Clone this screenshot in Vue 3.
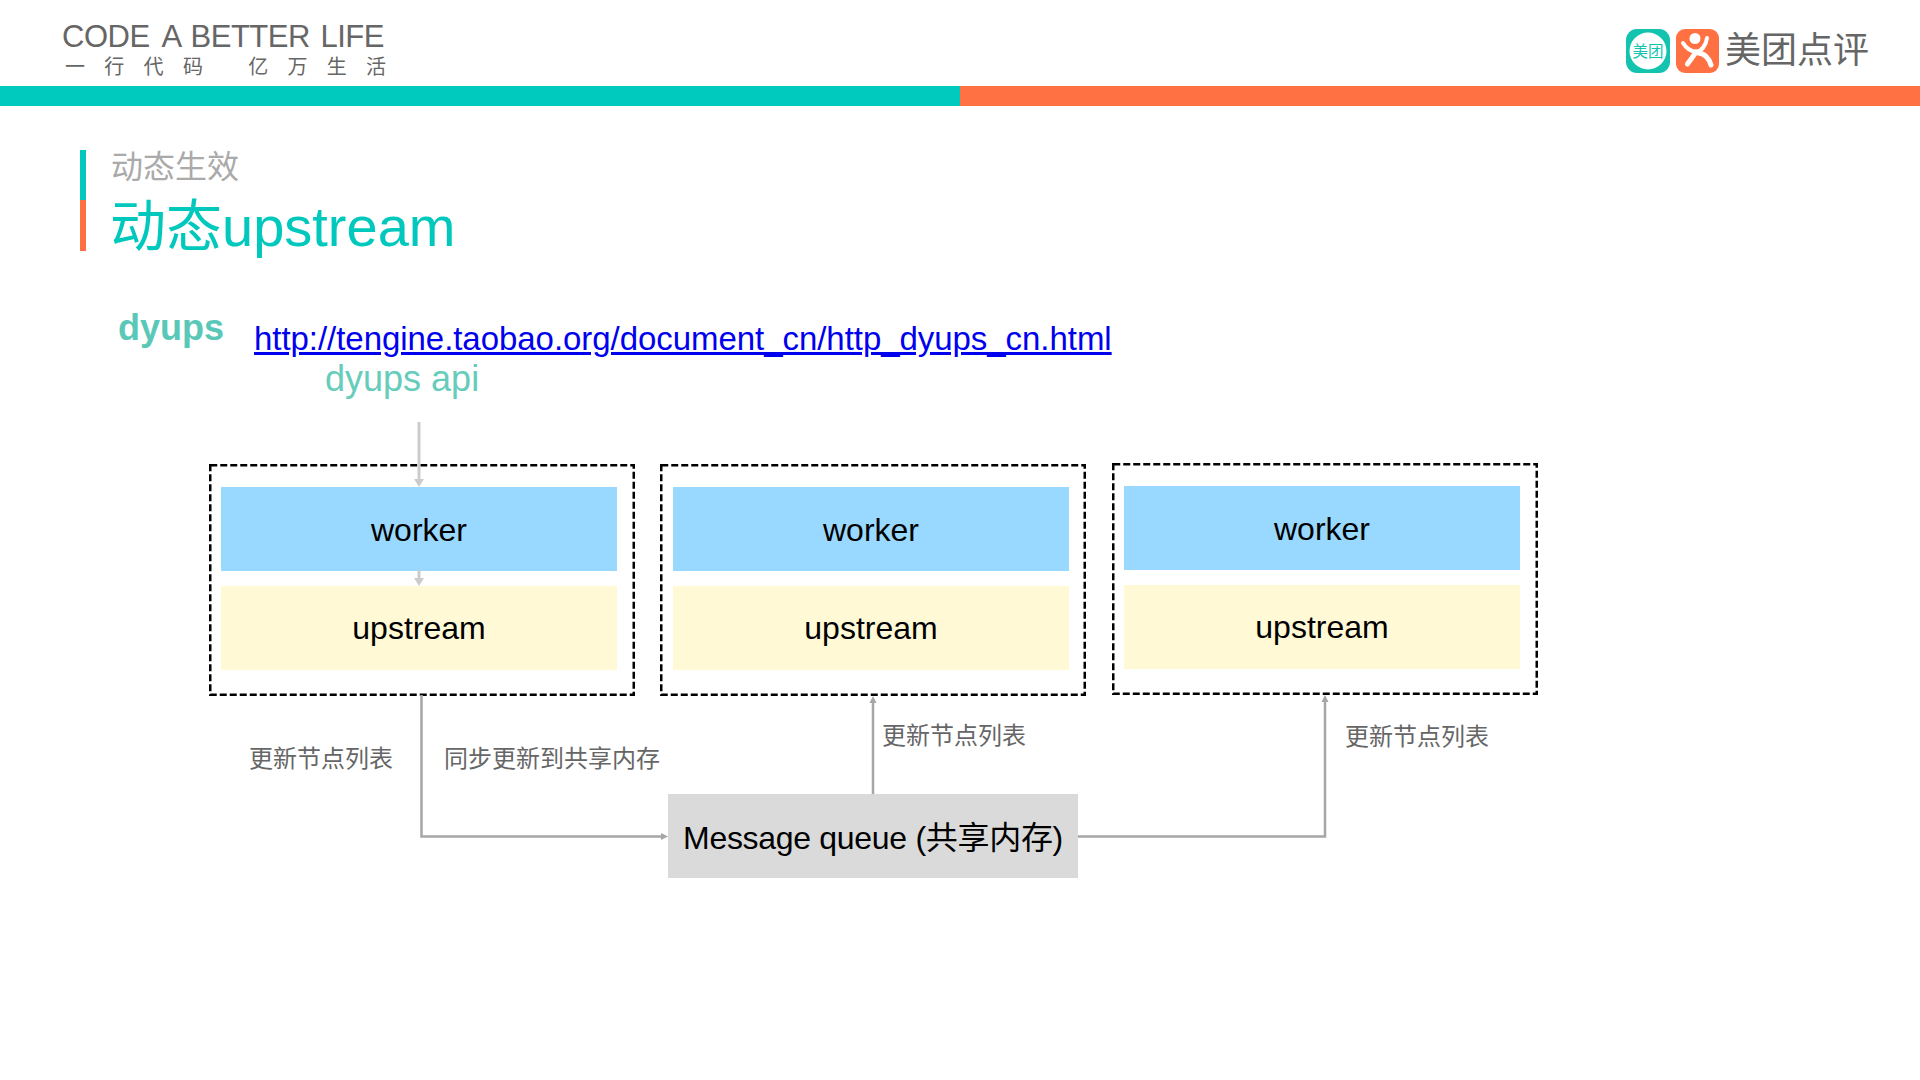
<script setup>
const boxes = [
  { x: 209, y: 464, pad: 12 },
  { x: 660, y: 464, pad: 13 },
  { x: 1112, y: 463, pad: 12 },
]
const labels = [
  { text: '更新节点列表', x: 249, y: 742 },
  { text: '同步更新到共享内存', x: 444, y: 742 },
  { text: '更新节点列表', x: 882, y: 719 },
  { text: '更新节点列表', x: 1345, y: 720 },
]
</script>

<template>
  <div class="slide">
    <header class="top">
      <div class="motto">
        <div class="motto-en"><span class="code">CODE</span> A BETTER LIFE</div>
        <div class="motto-cn"><span>一行代码</span><span>亿万生活</span></div>
      </div>
      <div class="brand">
        <svg class="mt" width="44" height="44" viewBox="0 0 44 44">
          <rect width="44" height="44" rx="11" fill="#13c3ae" />
          <circle cx="22" cy="22" r="18.5" fill="#fff" />
          <text x="22" y="28" text-anchor="middle" font-size="15.5" fill="#13c3ae" font-family="'Noto Sans CJK SC', sans-serif">美团</text>
        </svg>
        <svg class="dp" width="43" height="44" viewBox="0 0 43 44">
          <rect width="43" height="44" rx="9" fill="#ff7043" />
          <circle cx="19" cy="9.5" r="5.5" fill="#fff" />
          <path d="M7 14 C10 19 14 22 20 23 C26 22 30 16 31 9" fill="none" stroke="#fff" stroke-width="4" stroke-linecap="round" />
          <path d="M20 23 C17 28 14 31 11.5 35 M22 24 C28 24 33 29 35 36" fill="none" stroke="#fff" stroke-width="5" stroke-linecap="round" />
        </svg>
        <span class="brand-text">美团点评</span>
      </div>
    </header>
    <div class="stripe"></div>

    <section class="heading">
      <div class="heading-bar"></div>
      <div class="heading-text">
        <div class="eyebrow">动态生效</div>
        <h1 class="title">动态upstream</h1>
      </div>
    </section>

    <section class="intro">
      <div class="dyups">dyups</div>
      <div class="intro-right">
        <a class="link" href="#">http://tengine.taobao.org/document_cn/http_dyups_cn.html</a>
        <div class="api">dyups api</div>
      </div>
    </section>

    <div class="canvas">
      <div v-for="(b, i) in boxes" :key="i" class="box" :style="{ left: b.x + 'px', top: b.y + 'px', paddingLeft: b.pad + 'px' }">
        <svg class="dash" width="426" height="232" viewBox="0 0 426 232">
          <rect x="1.25" y="1.25" width="423.5" height="229.5" fill="none" stroke="#000" stroke-width="2.5" stroke-dasharray="7 3" />
        </svg>
        <div class="worker">worker</div>
        <div class="upstream">upstream</div>
      </div>
      <div class="queue">Message queue (共享内存)</div>
      <span v-for="(l, i) in labels" :key="'l' + i" class="label" :style="{ left: l.x + 'px', top: l.y + 'px' }">{{ l.text }}</span>
      <svg class="wires" width="1920" height="1080" viewBox="0 0 1920 1080">
        <path d="M419 422V480" stroke="#cccccc" stroke-width="3" fill="none" />
        <path d="M414 479H424L419 487Z" fill="#cccccc" />
        <path d="M419 570V578" stroke="#cccccc" stroke-width="3" fill="none" />
        <path d="M414 578H424L419 586Z" fill="#cccccc" />
        <path d="M421.5 695V836.5H661" stroke="#a6a6a6" stroke-width="2.5" fill="none" />
        <path d="M661 833L668 836.5L661 840Z" fill="#a6a6a6" />
        <path d="M873 794V702" stroke="#a6a6a6" stroke-width="2.5" fill="none" />
        <path d="M869.5 703L873 696L876.5 703Z" fill="#a6a6a6" />
        <path d="M1078 836.5H1325V702" stroke="#a6a6a6" stroke-width="2.5" fill="none" />
        <path d="M1321.5 702L1325 695L1328.5 702Z" fill="#a6a6a6" />
      </svg>
    </div>
  </div>
</template>

<style>
html, body { margin: 0; background: #fff; }
</style>

<style scoped>
.slide {
  position: relative;
  width: 1920px;
  height: 1080px;
  overflow: hidden;
  background: #fff;
  font-family: "Liberation Sans", "Noto Sans CJK SC", sans-serif;
}
.top {
  height: 86px;
  display: flex;
  justify-content: space-between;
  padding: 0 51px 0 62px;
  box-sizing: border-box;
  color: #666;
}
.motto { padding-top: 20px; width: 323px; }
.motto-en { font-size: 31px; line-height: 34px; white-space: nowrap; letter-spacing: -0.5px; word-spacing: 2.5px; }
.code { margin-right: 3px; }
.motto-cn {
  display: flex;
  gap: 26px;
  padding-left: 3px;
  padding-top: 1px;
  font-size: 20px;
  line-height: 24px;
  letter-spacing: 19.3px;
  white-space: nowrap;
}
.brand { display: flex; align-items: center; padding-top: 15px; height: 71px; box-sizing: border-box; margin-top: 8px; }
.mt { margin-left: -1px; }
.dp { margin-left: 6px; }
.brand-text { margin-left: 6px; font-size: 36px; line-height: 44px; color: #666; }
.stripe { height: 20px; background: linear-gradient(90deg, #00cabd 0 960px, #ff7043 960px); }
.heading { display: flex; margin: 44px 0 0 80px; gap: 25px; height: 101px; }
.heading-bar { width: 6px; height: 101px; background: linear-gradient(180deg, #00c8bc 0 50px, #ff7043 50px); }
.eyebrow { font-size: 32px; line-height: 32px; color: #aaa; margin-top: 1px; }
.title { margin: 11px 0 0 -1px; font-weight: 400; font-size: 56px; line-height: 66px; color: #00c8bc; }
.intro { display: flex; margin: 58px 0 0 118px; gap: 30px; }
.dyups { font-size: 36px; font-weight: 700; line-height: 40px; color: #5ac8b8; margin-top: -1px; }
.intro-right { padding-top: 10px; }
.link { font-size: 33px; letter-spacing: -0.05px; line-height: 40px; color: #0000ee; display: block; white-space: nowrap; }
.api { font-size: 36px; line-height: 40px; color: #66ccbb; margin-left: 71px; }
.canvas { position: absolute; inset: 0; pointer-events: none; }
.wires { position: absolute; left: 0; top: 0; }
.box {
  position: absolute;
  width: 426px;
  height: 232px;
  box-sizing: border-box;
  padding-top: 23px;
}
.dash { position: absolute; left: 0; top: 0; }
.worker, .upstream {
  width: 396px;
  height: 84px;
  box-sizing: border-box;
  display: flex;
  align-items: center;
  justify-content: center;
  font-size: 32px;
  color: #000;
}
.worker { background: #99d9ff; padding-top: 2px; }
.upstream { background: #fff9d6; margin-top: 15px; padding-top: 1px; }
.queue {
  position: absolute;
  left: 668px;
  top: 794px;
  width: 410px;
  height: 84px;
  box-sizing: border-box;
  padding-bottom: 2px;
  background: #dadada;
  display: flex;
  align-items: center;
  justify-content: center;
  font-size: 32px;
  letter-spacing: -0.3px;
  color: #000;
  white-space: nowrap;
}
.label { position: absolute; font-size: 24px; line-height: 34px; color: #666; white-space: nowrap; }
</style>
